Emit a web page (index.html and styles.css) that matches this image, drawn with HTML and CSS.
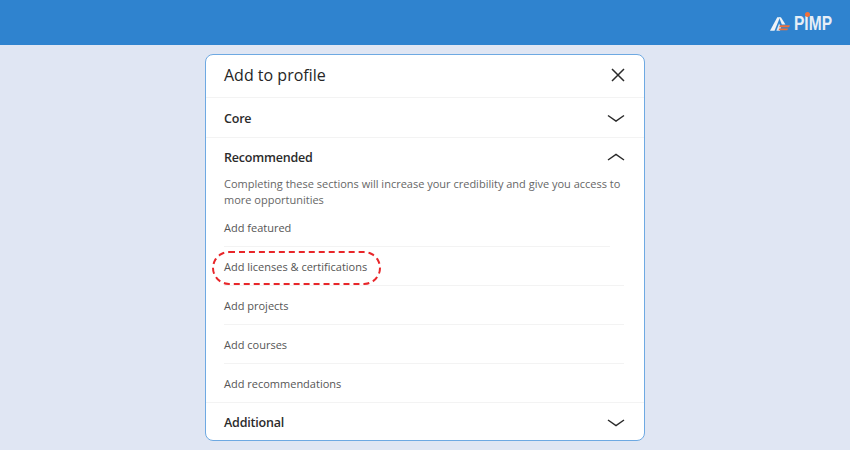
FILE: index.html
```html
<!DOCTYPE html>
<html lang="en">

<head>
    <meta charset="UTF-8">
    <title>Add to profile</title>
    <link rel="stylesheet" href="styles.css">
</head>

<body>
    <header class="topbar">
        <div class="logo">
            <svg class="logo-mark" width="20" height="15" viewBox="0 0 22 16">
                <path d="M0 16 L8 1 L11 1 L5 16 Z" fill="#eef3f8"/>
                <path d="M7 16 L10 8 L12 12 L11 16 Z" fill="#dfe8f2"/>
                <path d="M10 1 L12 1 L17 9 L13 9 Z" fill="#eef3f8"/>
                <path d="M11 10 H22 L21 12 H10 Z" fill="#f0703a"/>
                <path d="M10 13.5 H20 L19 15.5 H9.5 Z" fill="#f0703a"/>
            </svg>
            <span class="logo-text">PIMP</span>
            <span class="logo-dot"></span>
        </div>
    </header>

    <main class="page">
        <div class="card">
            <div class="card-head">
                <h1>Add to profile</h1>
                <svg class="icon-close" width="14" height="14" viewBox="0 0 14 14">
                    <path d="M1 1 L13 13 M13 1 L1 13" stroke="#2b2b2b" stroke-width="1.5" fill="none"/>
                </svg>
            </div>

            <div class="section section-closed">
                <h2>Core</h2>
                <svg class="chevron" width="18" height="9" viewBox="0 0 18 9">
                    <path d="M1 1.5 L9 7 L17 1.5" stroke="#2b2b2b" stroke-width="1.5" fill="none"/>
                </svg>
            </div>

            <div class="section-open">
                <div class="section-title">
                    <h2>Recommended</h2>
                    <svg class="chevron" width="18" height="9" viewBox="0 0 18 9">
                        <path d="M1 7 L9 1.5 L17 7" stroke="#2b2b2b" stroke-width="1.5" fill="none"/>
                    </svg>
                </div>
                <p class="section-note">Completing these sections will increase your credibility and give you access to more opportunities</p>
                <ul class="add-list">
                    <li class="short-line">Add featured</li>
                    <li class="marked">Add licenses &amp; certifications</li>
                    <li>Add projects</li>
                    <li>Add courses</li>
                    <li>Add recommendations</li>
                </ul>
            </div>

            <div class="section section-last">
                <h2>Additional</h2>
                <svg class="chevron" width="18" height="9" viewBox="0 0 18 9">
                    <path d="M1 2 L9 7.5 L17 2" stroke="#2b2b2b" stroke-width="1.5" fill="none"/>
                </svg>
            </div>
        </div>
    </main>
</body>

</html>
```

FILE: styles.css
```css
* {
    margin: 0;
    padding: 0;
    box-sizing: border-box;
}

body {
    font-family: "Open Sans", "Noto Sans", sans-serif;
    background-color: #e0e6f3;
    color: #2b2b2b;
    height: 450px;
    overflow: hidden;
}

.topbar {
    height: 45px;
    background: #2f83cf;
    display: flex;
    justify-content: flex-end;
    align-items: center;
    padding-right: 18px;
}

.logo {
    position: relative;
    display: flex;
    align-items: center;
    gap: 4px;
}

.logo-mark {
    margin-top: 1px;
}

.logo-text {
    display: block;
    width: 38px;
    font-family: "Liberation Sans", sans-serif;
    font-size: 21px;
    font-weight: 700;
    line-height: 20px;
    color: #e6eef7;
    transform: scaleX(0.74);
    transform-origin: left center;
}

.logo-dot {
    position: absolute;
    left: 35px;
    top: -1px;
    width: 5px;
    height: 5px;
    border-radius: 50%;
    background: #f0703a;
}

.page {
    display: flex;
    justify-content: center;
    padding-top: 9px;
}

.card {
    width: 440px;
    height: 387px;
    background: #fff;
    border: 1px solid #6ea9e2;
    border-radius: 8px;
    overflow: hidden;
}

.card-head {
    height: 43px;
    display: flex;
    justify-content: space-between;
    align-items: center;
    padding: 0 19px 2px 18px;
    border-bottom: 1px solid #f3f3f3;
}

h1 {
    font-size: 16px;
    font-weight: 400;
    color: #262626;
}

h2 {
    font-size: 12.5px;
    font-weight: 600;
    letter-spacing: -0.2px;
    color: #2b2b2b;
}

.section {
    display: flex;
    justify-content: space-between;
    align-items: center;
    padding: 0 19px 0 18px;
}

.section-closed {
    height: 40px;
    padding-top: 1px;
    border-bottom: 1px solid #f3f3f3;
}

.section-last {
    height: 39px;
    border-top: 1px solid #f3f3f3;
}

.section-title {
    display: flex;
    justify-content: space-between;
    align-items: center;
    height: 38px;
    padding: 0 19px 0 0;
}

.section-open {
    padding-left: 18px;
}

.section-note {
    font-size: 11px;
    line-height: 16px;
    color: #666;
    width: 400px;
}

.add-list {
    list-style: none;
    width: 400px;
}

.add-list li {
    position: relative;
    height: 39px;
    display: flex;
    align-items: center;
    font-size: 11px;
    color: #555;
    border-bottom: 1px solid #f3f3f3;
}

.add-list li:last-child {
    height: 38px;
    border-bottom: none;
}

/* first divider stops short of the others */
.add-list .short-line {
    border-bottom-color: transparent;
}

.short-line::after {
    content: "";
    position: absolute;
    left: 0;
    bottom: -1px;
    width: 386px;
    height: 1px;
    background: #f3f3f3;
}

/* red dashed ring drawn over the row */
.marked::after {
    content: "";
    box-sizing: border-box;
    position: absolute;
    left: -12px;
    top: 4px;
    width: 169px;
    height: 34px;
    border: 2px dashed #e8262a;
    border-radius: 17px;
}
```
